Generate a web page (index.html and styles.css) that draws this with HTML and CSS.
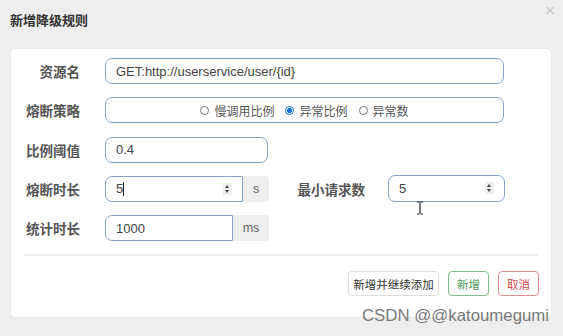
FILE: index.html
```html
<!DOCTYPE html>
<html lang="zh">
<head>
  <meta charset="UTF-8">
  <title>新增降级规则</title>
  <link rel="stylesheet" href="styles.css">
</head>
<body>
  <div class="dialog">
    <div class="dialog-header">
      <h3>新增降级规则</h3>
      <span class="close">&times;</span>
    </div>
    <div class="dialog-body">
      <div class="form-row">
        <label class="form-label">资源名</label>
        <div class="field field-wide">GET:http://userservice/user/{id}</div>
      </div>
      <div class="form-row">
        <label class="form-label">熔断策略</label>
        <div class="field field-wide radios">
          <span class="radio"></span><span class="radio-text">慢调用比例</span>
          <span class="radio checked"></span><span class="radio-text">异常比例</span>
          <span class="radio"></span><span class="radio-text">异常数</span>
        </div>
      </div>
      <div class="form-row">
        <label class="form-label">比例阈值</label>
        <div class="field field-mid">0.4</div>
      </div>
      <div class="form-row">
        <label class="form-label">熔断时长</label>
        <div class="group">
          <div class="field field-num">5<span class="caret"></span><span class="spin"></span></div>
          <span class="addon addon-s">s</span>
        </div>
        <label class="form-label label-second">最小请求数</label>
        <div class="field field-min">5<span class="spin"></span></div>
      </div>
      <div class="form-row">
        <label class="form-label">统计时长</label>
        <div class="group">
          <div class="field field-stat">1000</div>
          <span class="addon addon-ms">ms</span>
        </div>
      </div>
      <div class="divider"></div>
      <div class="actions">
        <button class="btn btn-default">新增并继续添加</button>
        <button class="btn btn-green">新增</button>
        <button class="btn btn-red">取消</button>
      </div>
    </div>
    <svg class="ibeam" width="8" height="14" viewBox="0 0 8 14">
      <path d="M1 1h2.5M4.5 1H7M4 1.5v11M1 13h2.5M4.5 13H7" stroke="#222" stroke-width="1.2" fill="none"/>
    </svg>
    <div class="watermark">CSDN @@katoumegumi</div>
  </div>
</body>
</html>
```
FILE: styles.css
```css
body {
  margin: 0;
  background: #eeeeee;
  font-family: "Liberation Sans", "Noto Sans CJK SC", sans-serif;
  color: #333;
}

.dialog {
  position: relative;
  width: 563px;
  height: 336px;
}

.dialog-header {
  height: 49px;
  position: relative;
}

.dialog-header h3 {
  margin: 0;
  padding: 10px 0 0 10px;
  font-size: 13px;
  font-weight: bold;
  font-family: "Noto Sans CJK SC", sans-serif;
  color: #333;
}

.close {
  position: absolute;
  left: 545px;
  top: 2px;
  font-size: 17px;
  line-height: 17px;
  color: #c4c4c4;
  font-family: "Liberation Sans", sans-serif;
}

.dialog-body {
  margin-left: 11px;
  width: 540px;
  height: 268px;
  box-sizing: border-box;
  background: #fff;
  border-radius: 4px;
  box-shadow: 0 0 1px rgba(0, 0, 0, 0.15);
  padding-top: 9px;
}

.form-row {
  display: flex;
  align-items: center;
  height: 26px;
  margin-bottom: 13.3px;
}

.form-label {
  width: 69px;
  text-align: right;
  margin-right: 25px;
  font-family: "Noto Sans CJK SC", sans-serif;
  font-weight: bold;
  font-size: 13.5px;
  color: #555;
}

.field {
  box-sizing: border-box;
  height: 26px;
  border: 1px solid #86a5c9;
  border-radius: 7px;
  padding: 0 10px;
  display: flex;
  align-items: center;
  font-size: 13px;
  color: #444;
  position: relative;
}

.field-wide { width: 399px; }
.field-mid { width: 163px; }

.radios {
  justify-content: center;
  font-family: "Noto Sans CJK SC", sans-serif;
  color: #555;
}

.radio {
  width: 9px;
  height: 9px;
  border: 1px solid #777;
  border-radius: 50%;
  margin-right: 5px;
  box-sizing: border-box;
}

.radio.checked {
  border-color: #1a73e8;
  background: radial-gradient(circle, #1a73e8 0 2.2px, #fff 2.8px);
}

.radio-text {
  margin-right: 11px;
  font-size: 12px;
}

.radio-text:last-child {
  margin-right: 0;
}

.group {
  display: flex;
}

.field-num {
  width: 138px;
  border-radius: 7px 0 0 7px;
}

.field-stat {
  width: 128px;
  border-radius: 7px 0 0 7px;
}

.addon {
  box-sizing: border-box;
  height: 26px;
  background: #eeeeee;
  color: #666;
  font-size: 12.5px;
  display: flex;
  align-items: center;
  justify-content: center;
  border-radius: 0 4px 4px 0;
}

.addon-s { width: 26px; }
.addon-ms { width: 36px; }

.label-second {
  width: 96px;
  margin-right: 23px;
}

.field-min {
  width: 117px;
  height: 27px;
}

.caret {
  display: inline-block;
  width: 1px;
  height: 14px;
  background: #222;
}

.spin {
  position: absolute;
  right: 10px;
  top: 6px;
  width: 9px;
  height: 12px;
  background: #eeeeee;
}

.spin::before,
.spin::after {
  content: "";
  position: absolute;
  left: 2px;
  border-left: 2.5px solid transparent;
  border-right: 2.5px solid transparent;
}

.spin::before {
  top: 2px;
  border-bottom: 3px solid #444;
}

.spin::after {
  bottom: 2px;
  border-top: 3px solid #444;
}

.divider {
  margin: 8px 0 0 13px;
  width: 515px;
  height: 2px;
  background: #efefef;
}

.actions {
  display: flex;
  justify-content: flex-end;
  gap: 9px;
  padding-right: 12px;
  margin-top: 15px;
}

.btn {
  height: 25px;
  padding: 0;
  background: #fff;
  border-radius: 4px;
  font-family: "Noto Sans CJK SC", sans-serif;
  font-size: 11.5px;
  border: 1px solid #ddd;
  color: #333;
}

.btn-default { width: 91px; }

.btn-green {
  width: 41px;
  border-color: #7fbf8c;
  color: #4a9a5a;
}

.btn-red {
  width: 41px;
  border-color: #e08e8e;
  color: #d04b4b;
}

.ibeam {
  position: absolute;
  left: 416px;
  top: 201px;
}

.watermark {
  position: absolute;
  left: 362px;
  top: 306px;
  font-family: "Liberation Sans", sans-serif;
  font-size: 16.8px;
  color: #7a7a7a;
}
```
